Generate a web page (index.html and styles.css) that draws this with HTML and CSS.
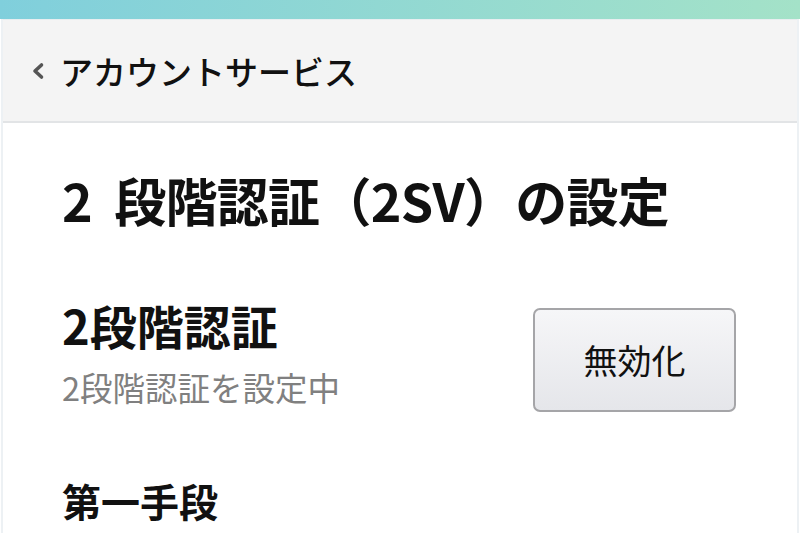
FILE: index.html
```html
<!DOCTYPE html>
<html lang="ja">
<head>
  <meta charset="UTF-8">
  <meta name="viewport" content="width=device-width, initial-scale=1.0">
  <title>2段階認証（2SV）の設定</title>
  <link rel="stylesheet" href="styles.css">
</head>
<body>
  <div class="top-bar"></div>
  <div class="page">
    <header class="nav-header">
      <a class="back-link" href="#">
        <svg class="back-icon" width="16" height="18" viewBox="0 0 16 18">
          <path d="M11.5 3 L5 9 L11.5 15" fill="none" stroke="#555" stroke-width="3.6" stroke-linecap="round" stroke-linejoin="round"/>
        </svg>
        <span>アカウントサービス</span>
      </a>
    </header>

    <main class="content">
      <h1 class="page-title">2&nbsp;&nbsp;段階認証（2SV）の設定</h1>

      <section class="setting-row">
        <div class="setting-text">
          <h2>2段階認証</h2>
          <p>2段階認証を設定中</p>
        </div>
        <button class="plain-button">無効化</button>
      </section>

      <h2 class="section-title">第一手段</h2>
    </main>
  </div>
</body>
</html>
```

FILE: styles.css
```css
:root {
  --text-color: #111;
  --sub-text: #808080;
  --header-bg: #f4f4f4;
  --line-color: #e2e4e6;
}

body {
  margin: 0;
  padding: 0;
  font-family: "Noto Sans CJK JP", "Noto Sans", sans-serif;
  color: var(--text-color);
  background: #fff;
  overflow: hidden;
}

.top-bar {
  height: 19px;
  background: linear-gradient(90deg, #80cfdc, #a4e2c8);
}

.page {
  border-left: 2px solid #edf1f4;
  border-right: 2px solid #edf1f4;
  min-height: 514px;
  box-sizing: border-box;
  margin: 0 1px;
}

.nav-header {
  background: var(--header-bg);
  height: 104px;
  border-top: 1px solid #e8eef0;
  border-bottom: 2px solid var(--line-color);
  box-sizing: border-box;
  display: flex;
  align-items: center;
  padding-left: 27px;
}

.back-link {
  display: flex;
  align-items: center;
  gap: 14px;
  color: var(--text-color);
  text-decoration: none;
  font-size: 33px;
  font-weight: 500;
}

.content {
  padding: 43px 59px 0 59px;
}

.page-title {
  margin: 0 0 63px 0;
  font-size: 52px;
  font-weight: bold;
  line-height: 1.3;
  letter-spacing: -0.7px;
}

.setting-row {
  display: flex;
  justify-content: space-between;
  align-items: flex-start;
}

.setting-text h2 {
  margin: 0;
  font-size: 47px;
  font-weight: bold;
  line-height: 1.2;
}

.setting-text p {
  margin: 14px 0 0 0;
  font-size: 32.5px;
  color: var(--sub-text);
  line-height: 1.2;
}

.plain-button {
  width: 203px;
  height: 104px;
  margin-top: 11px;
  margin-right: 2px;
  border: 2px solid #a5a5a8;
  border-radius: 7px;
  background: linear-gradient(180deg, #f6f6f8, #e5e6ea);
  font-family: inherit;
  font-size: 34px;
  color: var(--text-color);
  cursor: pointer;
}

.section-title {
  margin: 63px 0 0 0;
  font-size: 39px;
  font-weight: bold;
  line-height: 1.3;
}
```
